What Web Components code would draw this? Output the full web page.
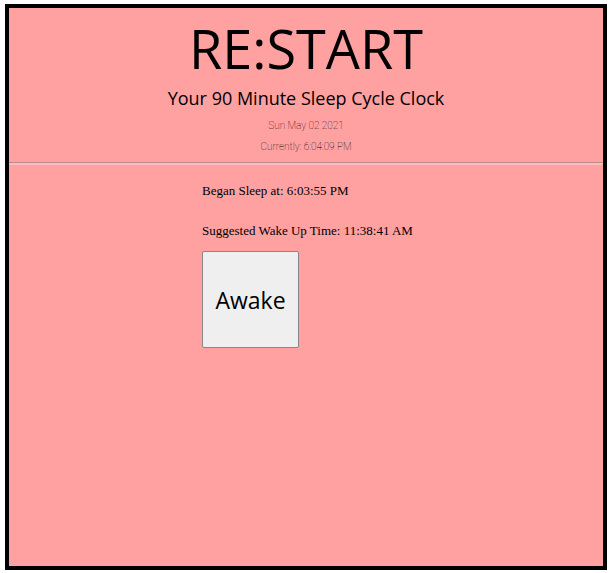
<!DOCTYPE html>
<html lang="en">
<head>
<meta charset="utf-8">
<meta name="viewport" content="width=device-width, initial-scale=1">
<title>RE:START</title>
<style>
  html { height: 100%; background: #fff; }
  body {
    box-sizing: border-box; min-height: 100%; margin: 0; padding: 4px 2px 3px 5px;
    display: flex; flex-direction: column;
    font-family: "Liberation Serif", "Times New Roman", serif; font-size: 13px; color: #000;
  }
</style>
</head>
<body>
<restart-app></restart-app>
<script>
  const define = (name, html) => customElements.define(name, class extends HTMLElement {
    constructor() {
      super();
      const template = document.createElement('template');
      template.innerHTML = html;
      this.attachShadow({ mode: 'open' }).append(template.content.cloneNode(true));
    }
  });

  define('clock-header', `
    <style>
      :host { display: block; text-align: center; padding-top: 2px; border-bottom: 1px solid #bd8a8c; box-shadow: 0 2px #ffbcbe; }
      h1, h2, p { margin: 0; font-weight: 400; }
      h1 { font: 400 54px/76px "Open Sans", "Noto Sans", sans-serif; }
      h2 { font: 400 18px/24px "Open Sans", "Noto Sans", sans-serif; }
      p { font: 100 10px/21px Roboto, sans-serif; }
      .dates { padding: 5px 0; }
    </style>
    <h1><slot name="title"></slot></h1>
    <h2><slot name="tagline"></slot></h2>
    <div class="dates">
      <p><slot name="date"></slot></p>
      <p><slot name="time"></slot></p>
    </div>`);

  define('sleep-record', `
    <style>
      :host { display: block; line-height: 16px; }
      p { margin: 0; }
    </style>
    <p><slot name="label"></slot> <slot></slot></p>`);

  define('awake-button', `
    <style>
      :host { display: block; }
      button {
        box-sizing: border-box; width: 97px; height: 97px; padding: 0;
        border: 1px solid #8a8586; border-radius: 2px; background: #efefef; color: #000;
        font: 400 23px/32px "Open Sans", "Noto Sans", sans-serif;
      }
    </style>
    <button type="button"><slot></slot></button>`);

  define('restart-app', `
    <style>
      :host { display: flex; flex-direction: column; flex: 1; border: 4px solid #000; background: #ffa1a1; }
      main { padding: 20px 0 24px calc(33.333% - 5px); display: flex; flex-direction: column; }
      .records { display: grid; gap: 24px; padding-bottom: 12px; }
    </style>
    <clock-header>
      <span slot="title">RE:START</span>
      <span slot="tagline">Your 90 Minute Sleep Cycle Clock</span>
      <span slot="date">Sun May 02 2021</span>
      <span slot="time">Currently: 6:04:09 PM</span>
    </clock-header>
    <main>
      <div class="records">
        <sleep-record><span slot="label">Began Sleep at:</span>6:03:55 PM</sleep-record>
        <sleep-record><span slot="label">Suggested Wake Up Time:</span>11:38:41 AM</sleep-record>
      </div>
      <awake-button>Awake</awake-button>
    </main>`);
</script>
</body>
</html>
